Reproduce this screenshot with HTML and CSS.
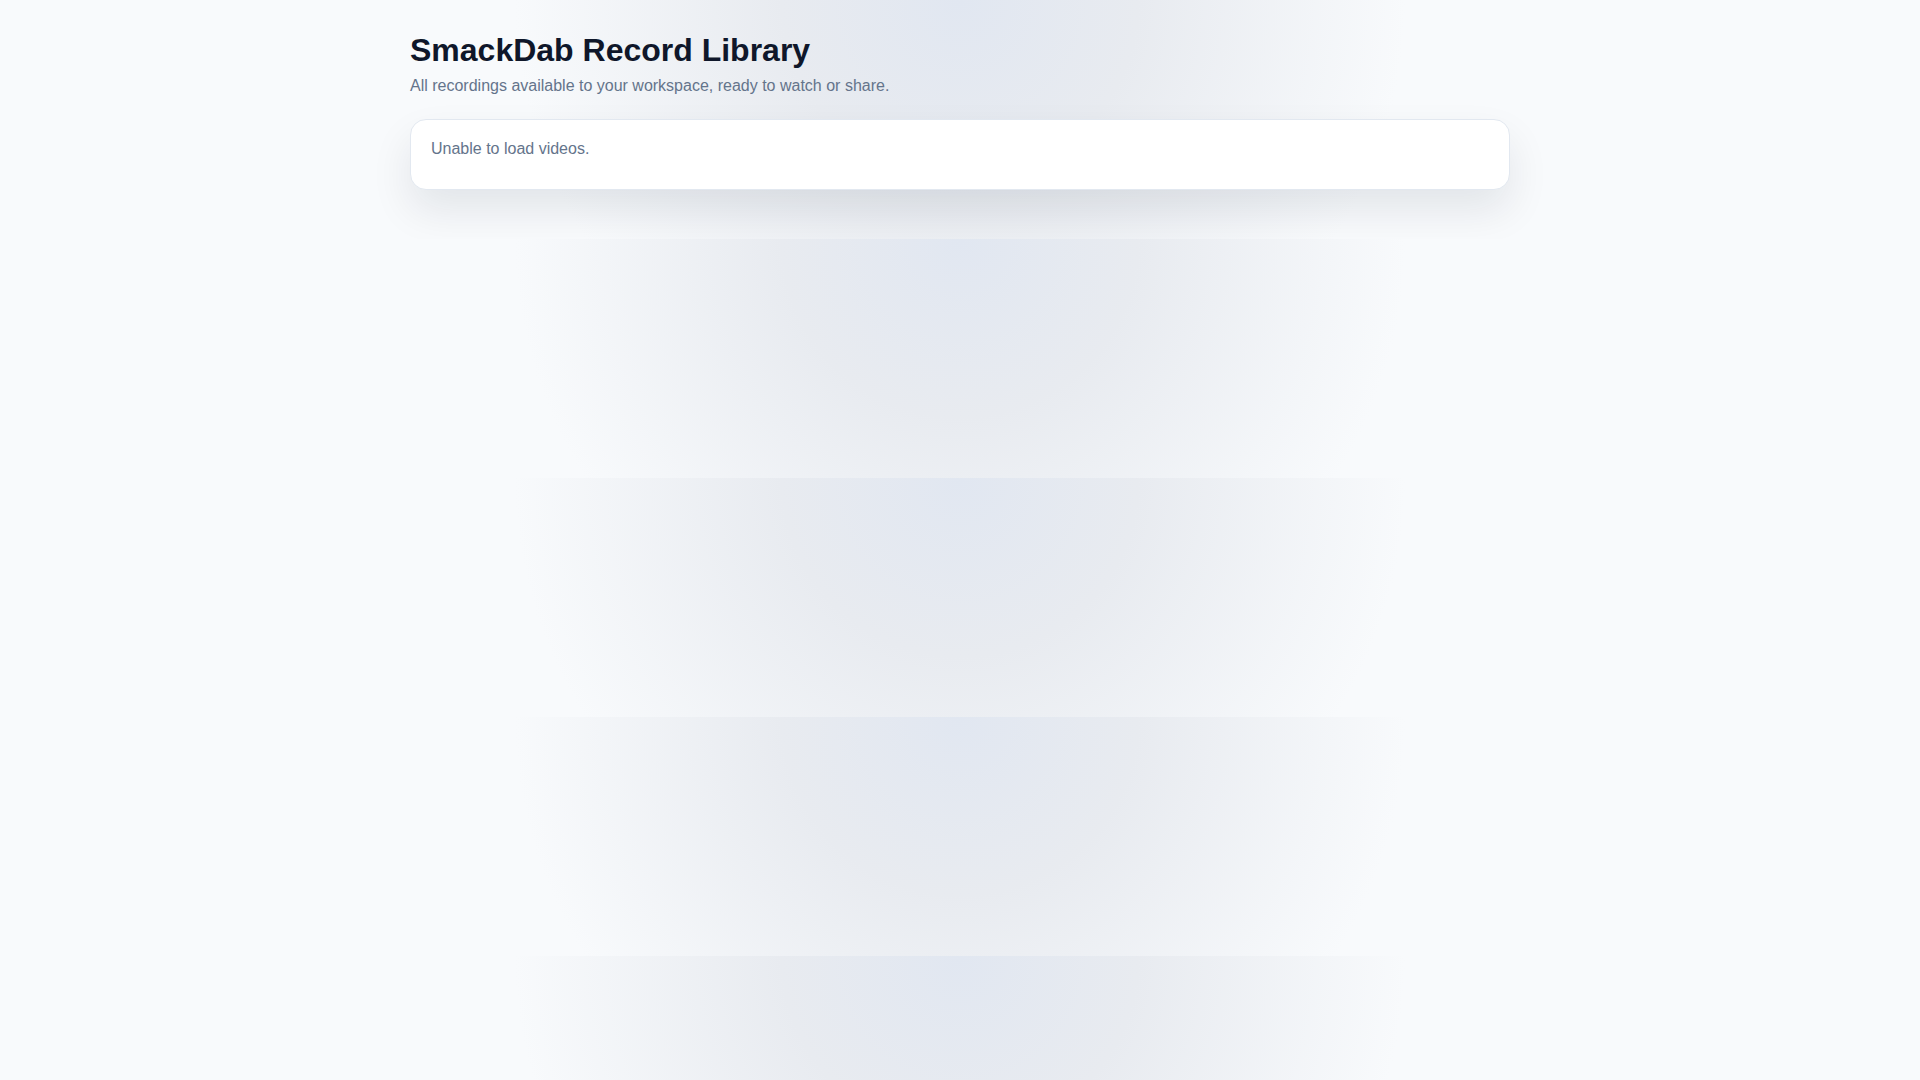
FILE: index.html
```html
<!DOCTYPE html>
<html lang="en">
<head>
<meta charset="utf-8">
<title>SmackDab Record Library</title>
<link rel="stylesheet" href="styles.css">
</head>
<body>
<div class="page">
  <main class="container">
    <header class="header">
      <h1 class="title">SmackDab Record Library</h1>
      <p class="subtitle">All recordings available to your workspace, ready to watch or share.</p>
    </header>
    <section class="card">
      <p class="message">Unable to load videos.</p>
    </section>
  </main>
</div>
</body>
</html>
```

FILE: styles.css
```css
* {
  box-sizing: border-box;
}

body {
  margin: 0;
  font-family: "Liberation Sans", Arial, sans-serif;
  color: #0f172a;
  background: radial-gradient(circle at top, #e1e7f1 0%, #e8ebf0 18%, #f8fafc 45%);
}

.page {
  padding: 33px 24px 49px;
  overflow: hidden;
}

.container {
  max-width: 1100px;
  margin: 0 auto;
}

.header {
  margin-bottom: 24px;
}

.title {
  margin: 0 0 9px;
  font-size: 32px;
  line-height: 1.1;
  font-weight: 700;
  color: #0f172a;
}

.subtitle {
  margin: 0;
  font-size: 16px;
  color: #64748b;
}

.card {
  background: #ffffff;
  border: 1px solid #e2e8f0;
  border-radius: 16px;
  padding: 17px 20px 28px;
  box-shadow: 0 20px 42px rgba(15, 23, 42, 0.09);
}

.message {
  margin: 0;
  font-size: 16px;
  line-height: 24px;
  color: #64748b;
}
```
